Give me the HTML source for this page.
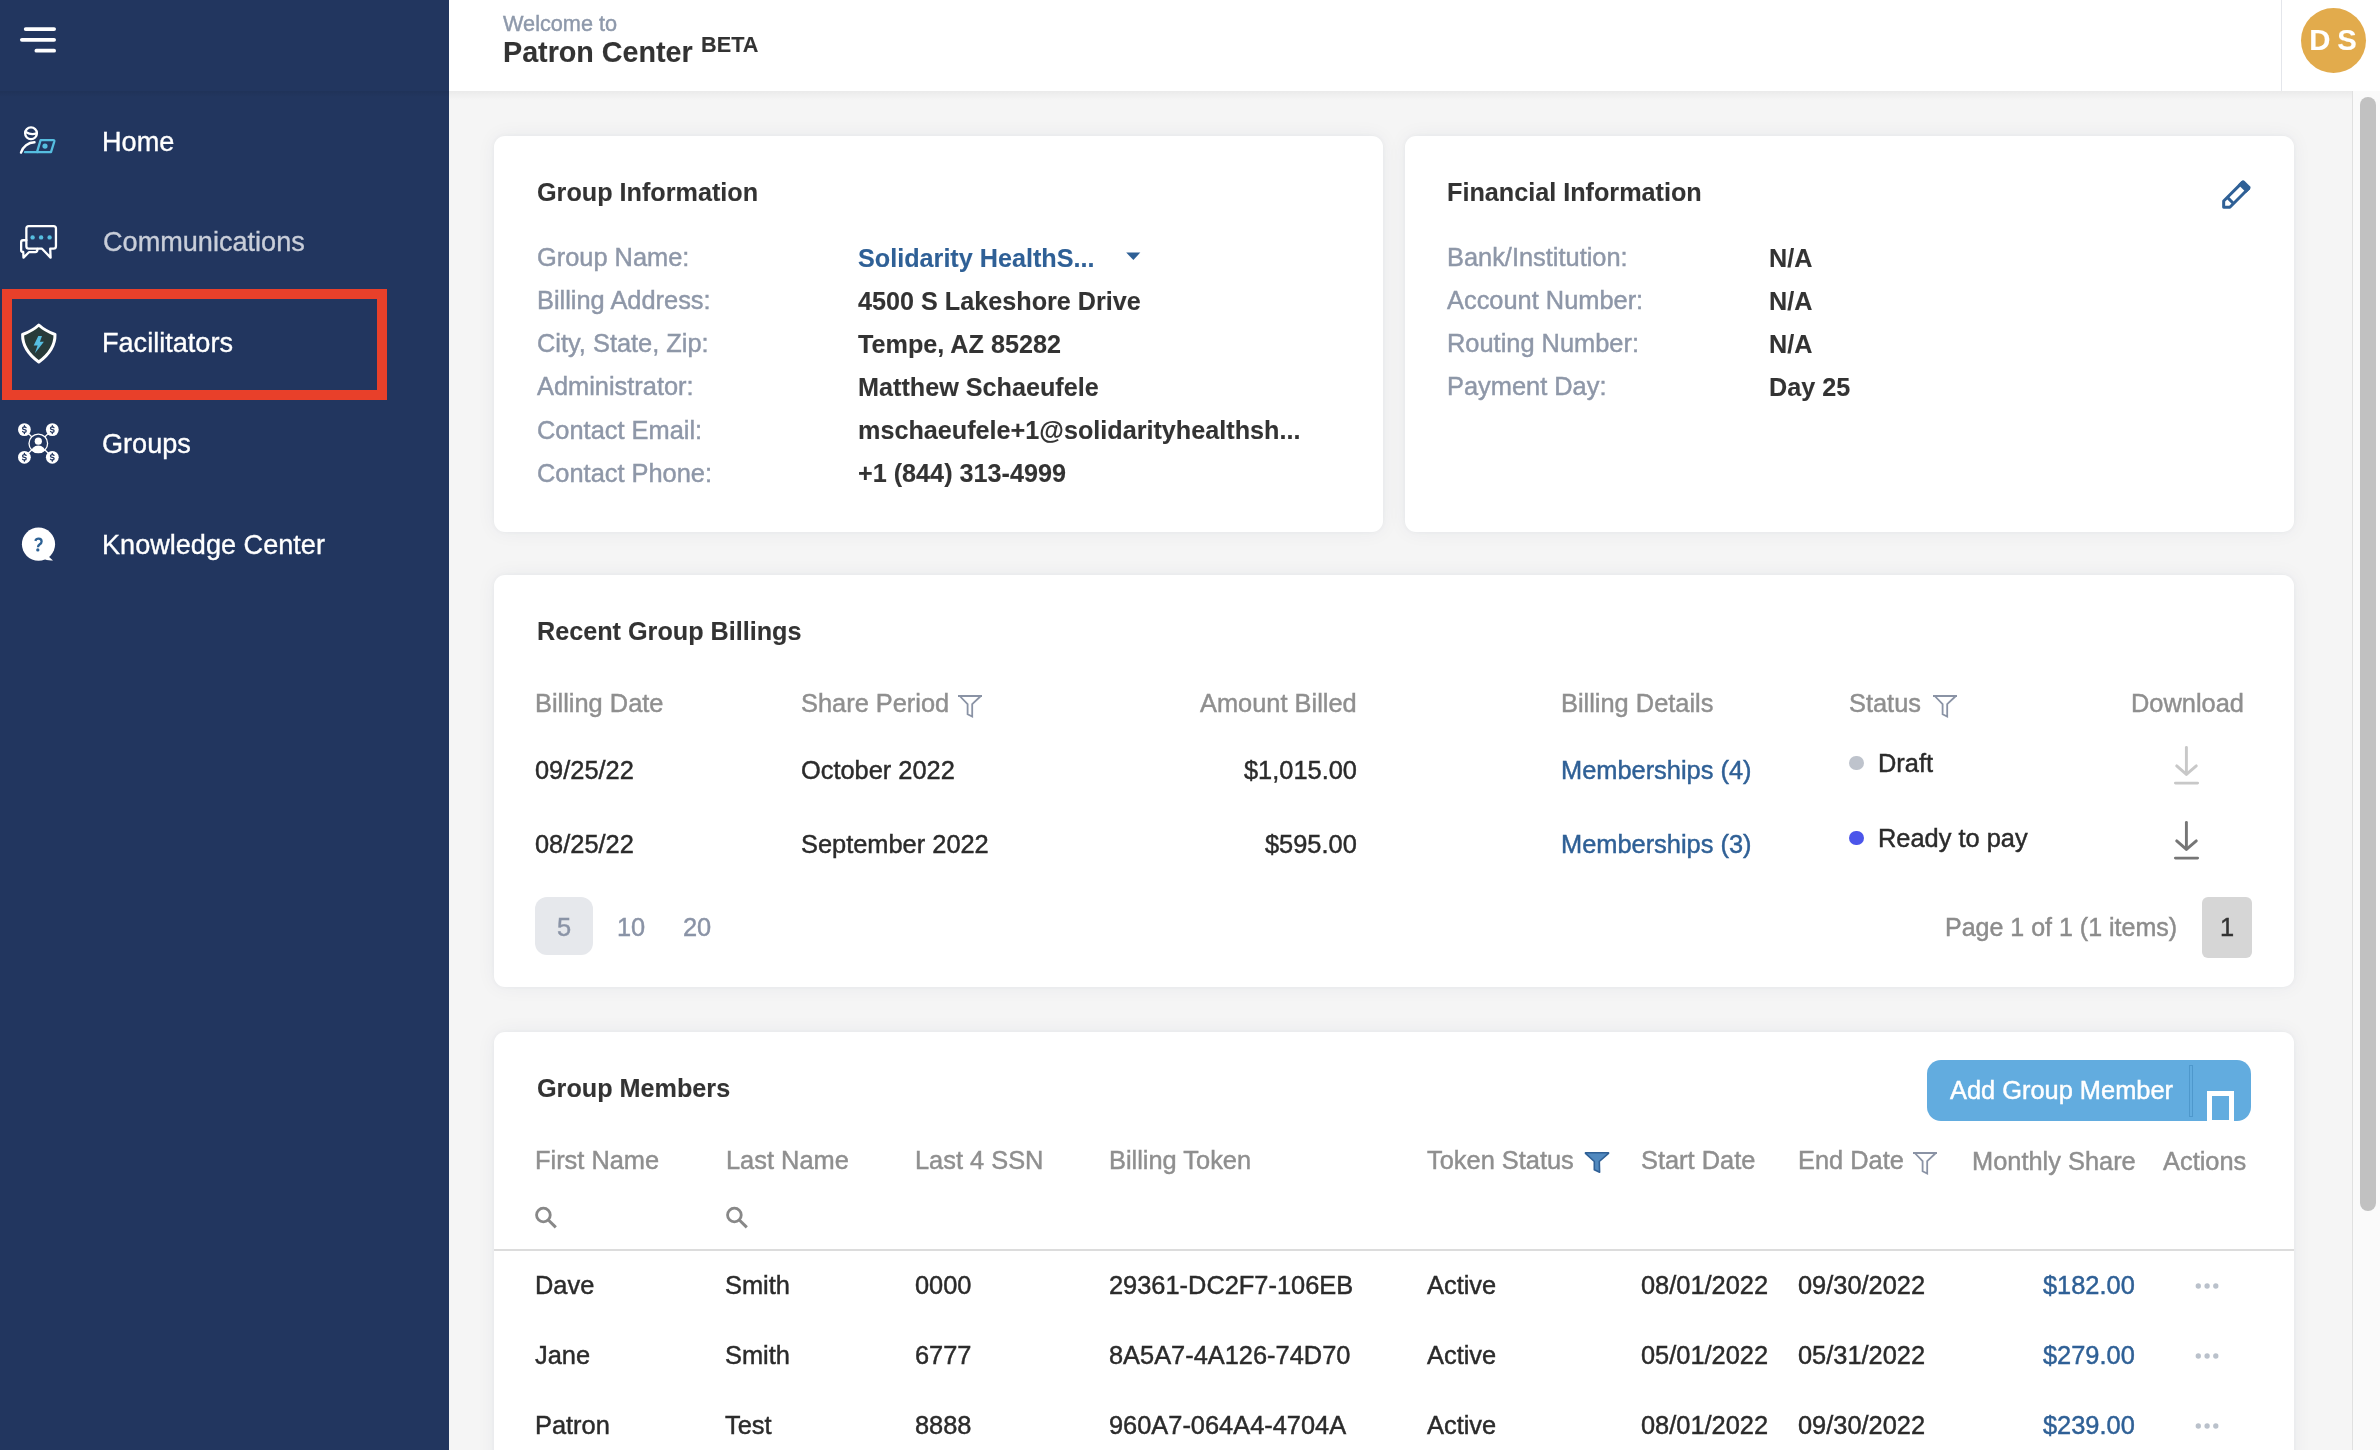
<!DOCTYPE html>
<html><head><meta charset="utf-8"><title>Patron Center</title>
<style>
html,body{margin:0;padding:0}
body{width:2380px;height:1450px;overflow:hidden;position:relative;background:#F5F5F5;font-family:"Liberation Sans",sans-serif}
.t{position:absolute;white-space:nowrap;line-height:0;will-change:transform;-webkit-text-stroke:0.45px currentColor}
.card{position:absolute;background:#fff;border-radius:11px;box-shadow:0 0 5px rgba(40,50,90,0.045),0 0 20px rgba(40,50,90,0.055)}
</style></head><body>
<div style="position:absolute;left:0;top:0;width:449px;height:1450px;background:#22365F"></div><div style="position:absolute;left:0;top:91px;width:449px;height:6px;background:linear-gradient(rgba(0,0,0,0.07),rgba(0,0,0,0))"></div><svg style="position:absolute;left:0;top:0" width="80" height="80"><g stroke="#fff" stroke-width="3.8" stroke-linecap="round">
<line x1="25.7" y1="29.1" x2="54.1" y2="29.1"/><line x1="21.9" y1="39.8" x2="54.1" y2="39.8"/><line x1="36.4" y1="50.7" x2="54.1" y2="50.7"/></g></svg><svg style="position:absolute;left:0;top:100px" width="80" height="80" viewBox="0 100 80 80"><g fill="none" stroke-linecap="round" stroke-linejoin="round">
<circle cx="31" cy="133.3" r="5.9" stroke="#fff" stroke-width="2.3"/>
<path d="M26.2 132.2 Q31 135.2 36.6 133.3" stroke="#fff" stroke-width="2.3"/>
<path d="M21 152.6 A14.5 14.5 0 0 1 34.5 142.3" stroke="#fff" stroke-width="2.4"/>
<path d="M25 152.2 L51 152.2 L54.3 141.5 Q54.6 140.2 53.3 140.2 L40.6 140.2 L37 152.2" stroke="#56BEE0" stroke-width="2.3"/>
</g><circle cx="45" cy="146.1" r="2.6" fill="#56BEE0"/></svg><svg style="position:absolute;left:0;top:200px" width="80" height="80" viewBox="0 200 80 80"><g fill="none" stroke="#fff" stroke-width="2.3" stroke-linejoin="round" stroke-linecap="round">
<path d="M28.8 226.15 L53.5 226.15 Q55.95 226.15 55.95 228.6 L55.95 246.25 Q55.95 248.7 53.5 248.7 L50.2 248.7 L50.6 257.6 L42 248.7 L28.8 248.7 Q26.35 248.7 26.35 246.25 L26.35 228.6 Q26.35 226.15 28.8 226.15 Z"/>
<path d="M26.35 240.25 L23.1 240.25 Q21.15 240.25 21.15 242.2 L21.15 250.2 Q21.15 251.8 23.2 252 L23.5 257.6 L28.9 252.2 L35.2 252.2 Q37.4 252.2 37.5 249"/>
</g><g fill="#56BEE0"><circle cx="32.6" cy="237.4" r="2.2"/><circle cx="41.1" cy="237.4" r="2.2"/><circle cx="49.6" cy="237.4" r="2.2"/></g></svg><svg style="position:absolute;left:0;top:300px" width="80" height="80" viewBox="0 300 80 80">
<path d="M38.8 325 Q33 330.5 22.6 334.5 Q22.3 350 38.8 362 Q55.3 350 55 334.5 Q44.6 330.5 38.8 325 Z" fill="#283B3A" stroke="#fff" stroke-width="3" stroke-linejoin="round"/>
<path d="M38.3 336 L42 336 L39.9 341.8 L43.9 341.8 L34.9 353.2 L37.6 345.6 L33.7 345.6 Z" fill="#56BEE0"/></svg><svg style="position:absolute;left:0;top:400px" width="80" height="80" viewBox="0 400 80 80">
<g stroke="#fff" stroke-width="1.3" fill="none"><circle cx="38.3" cy="443.4" r="9.3"/>
<line x1="24.4" y1="429.6" x2="31.7" y2="436.8"/><line x1="52.3" y1="429.6" x2="45" y2="436.8"/><line x1="24.4" y1="457.3" x2="31.7" y2="450"/><line x1="52.3" y1="457.3" x2="45" y2="450"/></g>
<circle cx="38.3" cy="441.2" r="3.6" fill="#fff"/>
<clipPath id="gc"><circle cx="38.3" cy="443.4" r="9.6"/></clipPath>
<ellipse cx="38.3" cy="453" rx="7.6" ry="7.6" fill="#fff" clip-path="url(#gc)"/>
<g fill="#fff"><circle cx="24.4" cy="429.6" r="6.4"/><circle cx="52.3" cy="429.6" r="6.4"/><circle cx="24.4" cy="457.3" r="6.4"/><circle cx="52.3" cy="457.3" r="6.4"/></g>
<g transform="translate(24.4 429.6)" fill="none" stroke="#22365F" stroke-width="1.25" stroke-linecap="round"><path d="M1.7 -1.9 Q1.3 -2.7 0 -2.7 Q-1.8 -2.7 -1.8 -1.35 Q-1.8 0 0 0 Q1.8 0 1.8 1.35 Q1.8 2.7 0 2.7 Q-1.4 2.7 -1.8 1.9"/><path d="M0 -3.9 V-2.8 M0 2.8 V3.9"/></g><g transform="translate(52.3 429.6)" fill="none" stroke="#22365F" stroke-width="1.25" stroke-linecap="round"><path d="M1.7 -1.9 Q1.3 -2.7 0 -2.7 Q-1.8 -2.7 -1.8 -1.35 Q-1.8 0 0 0 Q1.8 0 1.8 1.35 Q1.8 2.7 0 2.7 Q-1.4 2.7 -1.8 1.9"/><path d="M0 -3.9 V-2.8 M0 2.8 V3.9"/></g><g transform="translate(24.4 457.3)" fill="none" stroke="#22365F" stroke-width="1.25" stroke-linecap="round"><path d="M1.7 -1.9 Q1.3 -2.7 0 -2.7 Q-1.8 -2.7 -1.8 -1.35 Q-1.8 0 0 0 Q1.8 0 1.8 1.35 Q1.8 2.7 0 2.7 Q-1.4 2.7 -1.8 1.9"/><path d="M0 -3.9 V-2.8 M0 2.8 V3.9"/></g><g transform="translate(52.3 457.3)" fill="none" stroke="#22365F" stroke-width="1.25" stroke-linecap="round"><path d="M1.7 -1.9 Q1.3 -2.7 0 -2.7 Q-1.8 -2.7 -1.8 -1.35 Q-1.8 0 0 0 Q1.8 0 1.8 1.35 Q1.8 2.7 0 2.7 Q-1.4 2.7 -1.8 1.9"/><path d="M0 -3.9 V-2.8 M0 2.8 V3.9"/></g></svg><svg style="position:absolute;left:0;top:500px" width="80" height="80" viewBox="0 500 80 80">
<circle cx="38.5" cy="544.2" r="16.6" fill="#fff"/><path d="M48 556 L53 560.5 Q47 561 43 558.5 Z" fill="#fff"/>
<path d="M35.3 540.8 Q36 538.6 38.6 538.6 Q41.6 538.6 41.6 541.4 Q41.6 543 39.8 544.3 Q38 545.6 38 547.2" fill="none" stroke="#2D6194" stroke-width="2.3" stroke-linecap="butt"/><circle cx="37.8" cy="549.9" r="1.65" fill="#2D6194"/></svg><div class="t" style="left:102.30px;top:142.01px;font-size:27.1px;color:#FFFFFF;font-weight:400;-webkit-text-stroke:0.35px currentColor;">Home</div>
<div class="t" style="left:102.80px;top:242.21px;font-size:27.1px;color:#C9CED9;font-weight:400;-webkit-text-stroke:0.35px currentColor;">Communications</div>
<div class="t" style="left:102.30px;top:343.01px;font-size:27.1px;color:#FFFFFF;font-weight:400;-webkit-text-stroke:0.35px currentColor;">Facilitators</div>
<div class="t" style="left:102.30px;top:444.21px;font-size:27.1px;color:#FFFFFF;font-weight:400;-webkit-text-stroke:0.35px currentColor;">Groups</div>
<div class="t" style="left:102.30px;top:545.01px;font-size:27.1px;color:#FFFFFF;font-weight:400;-webkit-text-stroke:0.35px currentColor;">Knowledge Center</div>
<div style="position:absolute;left:2px;top:289px;width:365px;height:91px;border:10px solid #E8402A"></div><div style="position:absolute;left:449px;top:0;width:1931px;height:91px;background:#fff"></div><div style="position:absolute;left:449px;top:91px;width:1931px;height:9px;background:linear-gradient(rgba(0,0,0,0.045),rgba(0,0,0,0))"></div><div style="position:absolute;left:2280.6px;top:0;width:1.5px;height:91px;background:#E4E6EB"></div><div style="position:absolute;left:2301px;top:7.9px;width:65px;height:65px;border-radius:50%;background:#E2AB4C"></div><div class="t" style="left:2333.00px;top:39.95px;font-size:29.3px;color:#FFFFFF;font-weight:700;-webkit-text-stroke:0.1px currentColor;transform:translateX(-50%);word-spacing:-1.5px;">D S</div>
<div class="t" style="left:503.00px;top:23.98px;font-size:21.7px;color:#8E99AB;font-weight:400;">Welcome to</div>
<div class="t" style="left:503.30px;top:51.56px;font-size:28.7px;color:#333333;font-weight:700;-webkit-text-stroke:0.1px currentColor;">Patron Center</div>
<div class="t" style="left:701.00px;top:44.78px;font-size:21.7px;color:#333333;font-weight:700;-webkit-text-stroke:0.1px currentColor;">BETA</div>
<div style="position:absolute;left:2352px;top:91px;width:28px;height:1359px;background:#FAFAFA;border-left:1.6px solid #E0E0E0;box-sizing:border-box"></div><div style="position:absolute;left:2359.8px;top:97px;width:16px;height:1114px;border-radius:8px;background:#C1C1C1"></div><div class="card" style="left:494px;top:136px;width:889px;height:396px"></div><div class="t" style="left:536.80px;top:192.07px;font-size:25.2px;color:#333333;font-weight:700;-webkit-text-stroke:0.1px currentColor;">Group Information</div>
<div class="t" style="left:536.80px;top:257.10px;font-size:25.4px;color:#8E97A8;font-weight:400;">Group Name:</div>
<div class="t" style="left:858.00px;top:257.87px;font-size:25.2px;color:#2F6096;font-weight:700;-webkit-text-stroke:0.1px currentColor;">Solidarity HealthS...</div>
<div class="t" style="left:536.80px;top:300.20px;font-size:25.4px;color:#8E97A8;font-weight:400;">Billing Address:</div>
<div class="t" style="left:858.00px;top:300.97px;font-size:25.2px;color:#333333;font-weight:700;-webkit-text-stroke:0.1px currentColor;">4500 S Lakeshore Drive</div>
<div class="t" style="left:536.80px;top:343.30px;font-size:25.4px;color:#8E97A8;font-weight:400;">City, State, Zip:</div>
<div class="t" style="left:858.00px;top:344.07px;font-size:25.2px;color:#333333;font-weight:700;-webkit-text-stroke:0.1px currentColor;">Tempe, AZ 85282</div>
<div class="t" style="left:536.80px;top:386.40px;font-size:25.4px;color:#8E97A8;font-weight:400;">Administrator:</div>
<div class="t" style="left:858.00px;top:387.17px;font-size:25.2px;color:#333333;font-weight:700;-webkit-text-stroke:0.1px currentColor;">Matthew Schaeufele</div>
<div class="t" style="left:536.80px;top:429.50px;font-size:25.4px;color:#8E97A8;font-weight:400;">Contact Email:</div>
<div class="t" style="left:858.00px;top:430.27px;font-size:25.2px;color:#333333;font-weight:700;-webkit-text-stroke:0.1px currentColor;">mschaeufele+1@solidarityhealthsh...</div>
<div class="t" style="left:536.80px;top:472.60px;font-size:25.4px;color:#8E97A8;font-weight:400;">Contact Phone:</div>
<div class="t" style="left:858.00px;top:473.37px;font-size:25.2px;color:#333333;font-weight:700;-webkit-text-stroke:0.1px currentColor;">+1 (844) 313-4999</div>
<svg style="position:absolute;left:1120px;top:248px" width="30" height="20"><path d="M6.2 4.6 L20.3 4.6 L13.4 11.9 Z" fill="#2F6096"/></svg><div class="card" style="left:1405px;top:136px;width:889px;height:396px"></div><div class="t" style="left:1447.30px;top:192.07px;font-size:25.2px;color:#333333;font-weight:700;-webkit-text-stroke:0.1px currentColor;">Financial Information</div>
<div class="t" style="left:1447.30px;top:257.10px;font-size:25.4px;color:#8E97A8;font-weight:400;">Bank/Institution:</div>
<div class="t" style="left:1768.50px;top:257.87px;font-size:25.2px;color:#333333;font-weight:700;-webkit-text-stroke:0.1px currentColor;">N/A</div>
<div class="t" style="left:1447.30px;top:300.20px;font-size:25.4px;color:#8E97A8;font-weight:400;">Account Number:</div>
<div class="t" style="left:1768.50px;top:300.97px;font-size:25.2px;color:#333333;font-weight:700;-webkit-text-stroke:0.1px currentColor;">N/A</div>
<div class="t" style="left:1447.30px;top:343.30px;font-size:25.4px;color:#8E97A8;font-weight:400;">Routing Number:</div>
<div class="t" style="left:1768.50px;top:344.07px;font-size:25.2px;color:#333333;font-weight:700;-webkit-text-stroke:0.1px currentColor;">N/A</div>
<div class="t" style="left:1447.30px;top:386.40px;font-size:25.4px;color:#8E97A8;font-weight:400;">Payment Day:</div>
<div class="t" style="left:1768.50px;top:387.17px;font-size:25.2px;color:#333333;font-weight:700;-webkit-text-stroke:0.1px currentColor;">Day 25</div>
<svg style="position:absolute;left:2200px;top:160px" width="70" height="70" viewBox="2200 160 70 70">
<g transform="translate(2222.1 208.8) rotate(-45)">
<path d="M2.2 0 L6.6 -4.35 L33 -4.35 L33 4.35 L6.6 4.35 Z" fill="none" stroke="#2F6096" stroke-width="3" stroke-linejoin="round"/>
<line x1="11.8" y1="-5" x2="11.8" y2="5" stroke="#2F6096" stroke-width="3"/>
<path d="M28.5 -5.85 L33.5 -5.85 Q35.6 -5.85 35.6 -3.75 L35.6 3.75 Q35.6 5.85 33.5 5.85 L28.5 5.85 Z" fill="#2F6096"/>
</g></svg><div class="card" style="left:494px;top:575px;width:1800px;height:412px"></div><div class="t" style="left:536.50px;top:631.17px;font-size:25.2px;color:#333333;font-weight:700;-webkit-text-stroke:0.1px currentColor;">Recent Group Billings</div>
<div class="t" style="left:535.20px;top:702.80px;font-size:25.4px;color:#8F8F8F;font-weight:400;">Billing Date</div>
<div class="t" style="left:800.50px;top:702.80px;font-size:25.4px;color:#8F8F8F;font-weight:400;">Share Period</div>
<div class="t" style="right:1023.50px;top:702.80px;font-size:25.4px;color:#8F8F8F;font-weight:400;">Amount Billed</div>
<div class="t" style="left:1560.80px;top:702.80px;font-size:25.4px;color:#8F8F8F;font-weight:400;">Billing Details</div>
<div class="t" style="left:1848.50px;top:702.80px;font-size:25.4px;color:#8F8F8F;font-weight:400;">Status</div>
<div class="t" style="right:136.00px;top:702.80px;font-size:25.4px;color:#8F8F8F;font-weight:400;">Download</div>
<svg style="position:absolute;left:956px;top:693.2px" width="30" height="30" viewBox="-2 -2 30 30">
<path d="M0 1 L24 1" stroke="#8A93A5" stroke-width="2"/>
<path d="M2.2 1.5 L9.6 9.2 L9.6 19.3 L14.2 21.5 L14.2 9.2 L22.3 1.5" fill="none" stroke="#8A93A5" stroke-width="1.8" stroke-linejoin="miter"/></svg><svg style="position:absolute;left:1931px;top:693.2px" width="30" height="30" viewBox="-2 -2 30 30">
<path d="M0 1 L24 1" stroke="#8A93A5" stroke-width="2"/>
<path d="M2.2 1.5 L9.6 9.2 L9.6 19.3 L14.2 21.5 L14.2 9.2 L22.3 1.5" fill="none" stroke="#8A93A5" stroke-width="1.8" stroke-linejoin="miter"/></svg><div class="t" style="left:534.50px;top:770.10px;font-size:25.4px;color:#2B2B2B;font-weight:400;">09/25/22</div>
<div class="t" style="left:534.50px;top:844.20px;font-size:25.4px;color:#2B2B2B;font-weight:400;">08/25/22</div>
<div class="t" style="left:800.50px;top:770.10px;font-size:25.4px;color:#2B2B2B;font-weight:400;">October 2022</div>
<div class="t" style="left:800.50px;top:844.20px;font-size:25.4px;color:#2B2B2B;font-weight:400;">September 2022</div>
<div class="t" style="right:1023.50px;top:770.10px;font-size:25.4px;color:#2B2B2B;font-weight:400;">$1,015.00</div>
<div class="t" style="right:1023.50px;top:844.20px;font-size:25.4px;color:#2B2B2B;font-weight:400;">$595.00</div>
<div class="t" style="left:1560.80px;top:770.10px;font-size:25.4px;color:#2F6096;font-weight:400;">Memberships (4)</div>
<div class="t" style="left:1560.80px;top:844.20px;font-size:25.4px;color:#2F6096;font-weight:400;">Memberships (3)</div>
<div style="position:absolute;left:1849.2px;top:755.8px;width:14.6px;height:14.6px;border-radius:50%;background:#BEC3CC"></div><div style="position:absolute;left:1849.2px;top:830.8px;width:14.6px;height:14.6px;border-radius:50%;background:#4B55EA"></div><div class="t" style="left:1877.80px;top:763.00px;font-size:25.4px;color:#2B2B2B;font-weight:400;">Draft</div>
<div class="t" style="left:1877.80px;top:837.90px;font-size:25.4px;color:#2B2B2B;font-weight:400;">Ready to pay</div>
<svg style="position:absolute;left:2165px;top:740px" width="40" height="50" viewBox="0 0 40 50"><g fill="none" stroke="#C8C8C8" stroke-width="2.9" stroke-linecap="round" stroke-linejoin="round">
<line x1="21.4" y1="7.4" x2="21.4" y2="34"/><polyline points="11.7,25.9 21.4,34.4 31.3,25.9"/><line x1="10.4" y1="43.1" x2="32.6" y2="43.1"/></g></svg><svg style="position:absolute;left:2165px;top:815px" width="40" height="50" viewBox="0 0 40 50"><g fill="none" stroke="#767676" stroke-width="2.9" stroke-linecap="round" stroke-linejoin="round">
<line x1="21.4" y1="7.4" x2="21.4" y2="34"/><polyline points="11.7,25.9 21.4,34.4 31.3,25.9"/><line x1="10.4" y1="43.1" x2="32.6" y2="43.1"/></g></svg><div style="position:absolute;left:535px;top:896.6px;width:58px;height:58px;border-radius:12px;background:#E6E8EC"></div><div class="t" style="left:564.00px;top:926.50px;font-size:25.4px;color:#8A93A6;font-weight:400;transform:translateX(-50%);">5</div>
<div class="t" style="left:616.50px;top:926.50px;font-size:25.4px;color:#8A93A6;font-weight:400;">10</div>
<div class="t" style="left:682.80px;top:926.50px;font-size:25.4px;color:#8A93A6;font-weight:400;">20</div>
<div class="t" style="right:202.50px;top:926.94px;font-size:25px;color:#8C8C8C;font-weight:400;">Page 1 of 1 (1 items)</div>
<div style="position:absolute;left:2202px;top:897px;width:49.5px;height:61px;border-radius:6px;background:#D6D6D6"></div><div class="t" style="left:2226.80px;top:926.80px;font-size:25.4px;color:#333333;font-weight:400;transform:translateX(-50%);">1</div>
<div class="card" style="left:494px;top:1032px;width:1800px;height:500px"></div><div class="t" style="left:536.50px;top:1087.97px;font-size:25.2px;color:#333333;font-weight:700;-webkit-text-stroke:0.1px currentColor;">Group Members</div>
<div style="position:absolute;left:1927px;top:1060px;width:324px;height:61px;border-radius:14px;background:#62ACDF"></div><div style="position:absolute;left:2189.2px;top:1065px;width:3.5px;height:52px;box-sizing:border-box;border:0.8px solid #4E98CC"></div><div style="position:absolute;left:2206.5px;top:1090.8px;width:27.6px;height:30px;box-sizing:border-box;border:5.5px solid #fff;border-bottom:0.8px solid #fff"></div><div class="t" style="left:1949.50px;top:1090.20px;font-size:25.4px;color:#FFFFFF;font-weight:400;">Add Group Member</div>
<div class="t" style="left:535.20px;top:1160.40px;font-size:25.4px;color:#8F8F8F;font-weight:400;">First Name</div>
<div class="t" style="left:725.50px;top:1160.40px;font-size:25.4px;color:#8F8F8F;font-weight:400;">Last Name</div>
<div class="t" style="left:915.00px;top:1160.40px;font-size:25.4px;color:#8F8F8F;font-weight:400;">Last 4 SSN</div>
<div class="t" style="left:1109.00px;top:1160.40px;font-size:25.4px;color:#8F8F8F;font-weight:400;">Billing Token</div>
<div class="t" style="left:1427.00px;top:1160.40px;font-size:25.4px;color:#8F8F8F;font-weight:400;">Token Status</div>
<div class="t" style="left:1641.00px;top:1160.40px;font-size:25.4px;color:#8F8F8F;font-weight:400;">Start Date</div>
<div class="t" style="left:1797.50px;top:1160.40px;font-size:25.4px;color:#8F8F8F;font-weight:400;">End Date</div>
<div class="t" style="right:244.00px;top:1161.30px;font-size:25.4px;color:#8F8F8F;font-weight:400;">Monthly Share</div>
<div class="t" style="left:2162.80px;top:1161.30px;font-size:25.4px;color:#8F8F8F;font-weight:400;">Actions</div>
<svg style="position:absolute;left:1583px;top:1150px" width="30" height="30" viewBox="-2 -2 30 30">
<path d="M0.5 0.8 L23.5 0.8 L23.5 1.4 L14.3 9.5 L14.6 20.3 L9.3 17.8 L9.3 9.5 L0.5 1.4 Z" fill="#5189BF" stroke="#2F6096" stroke-width="1.6" stroke-linejoin="round"/></svg><svg style="position:absolute;left:1910.6px;top:1149.5px" width="30" height="30" viewBox="-2 -2 30 30">
<path d="M0 1 L24 1" stroke="#8A93A5" stroke-width="2"/>
<path d="M2.2 1.5 L9.6 9.2 L9.6 19.3 L14.2 21.5 L14.2 9.2 L22.3 1.5" fill="none" stroke="#8A93A5" stroke-width="1.8" stroke-linejoin="miter"/></svg><svg style="position:absolute;left:530px;top:1200px" width="35" height="35" viewBox="0 0 35 35"><g fill="none" stroke="#888" stroke-linecap="butt">
<circle cx="13.4" cy="15" r="6.85" stroke-width="2.8"/><line x1="18.6" y1="20.2" x2="25.8" y2="27.4" stroke-width="3"/></g></svg><svg style="position:absolute;left:720.5px;top:1200px" width="35" height="35" viewBox="0 0 35 35"><g fill="none" stroke="#888" stroke-linecap="butt">
<circle cx="13.4" cy="15" r="6.85" stroke-width="2.8"/><line x1="18.6" y1="20.2" x2="25.8" y2="27.4" stroke-width="3"/></g></svg><div style="position:absolute;left:494px;top:1249px;width:1800px;height:2px;background:#DCDCDC"></div><div class="t" style="left:534.50px;top:1284.90px;font-size:25.4px;color:#2B2B2B;font-weight:400;">Dave</div>
<div class="t" style="left:725.00px;top:1284.90px;font-size:25.4px;color:#2B2B2B;font-weight:400;">Smith</div>
<div class="t" style="left:914.50px;top:1284.90px;font-size:25.4px;color:#2B2B2B;font-weight:400;">0000</div>
<div class="t" style="left:1108.50px;top:1284.90px;font-size:25.4px;color:#2B2B2B;font-weight:400;">29361-DC2F7-106EB</div>
<div class="t" style="left:1427.00px;top:1284.90px;font-size:25.4px;color:#2B2B2B;font-weight:400;">Active</div>
<div class="t" style="left:1641.00px;top:1284.90px;font-size:25.4px;color:#2B2B2B;font-weight:400;">08/01/2022</div>
<div class="t" style="left:1797.50px;top:1284.90px;font-size:25.4px;color:#2B2B2B;font-weight:400;">09/30/2022</div>
<div class="t" style="right:245.00px;top:1284.90px;font-size:25.4px;color:#2F6096;font-weight:400;">$182.00</div>
<svg style="position:absolute;left:2190px;top:1281.0px" width="35" height="10"><g fill="#BAC1CB"><circle cx="8.3" cy="5" r="2.65"/><circle cx="17.1" cy="5" r="2.65"/><circle cx="25.8" cy="5" r="2.65"/></g></svg><div class="t" style="left:534.50px;top:1354.50px;font-size:25.4px;color:#2B2B2B;font-weight:400;">Jane</div>
<div class="t" style="left:725.00px;top:1354.50px;font-size:25.4px;color:#2B2B2B;font-weight:400;">Smith</div>
<div class="t" style="left:914.50px;top:1354.50px;font-size:25.4px;color:#2B2B2B;font-weight:400;">6777</div>
<div class="t" style="left:1108.50px;top:1354.50px;font-size:25.4px;color:#2B2B2B;font-weight:400;">8A5A7-4A126-74D70</div>
<div class="t" style="left:1427.00px;top:1354.50px;font-size:25.4px;color:#2B2B2B;font-weight:400;">Active</div>
<div class="t" style="left:1641.00px;top:1354.50px;font-size:25.4px;color:#2B2B2B;font-weight:400;">05/01/2022</div>
<div class="t" style="left:1797.50px;top:1354.50px;font-size:25.4px;color:#2B2B2B;font-weight:400;">05/31/2022</div>
<div class="t" style="right:245.00px;top:1354.50px;font-size:25.4px;color:#2F6096;font-weight:400;">$279.00</div>
<svg style="position:absolute;left:2190px;top:1350.6px" width="35" height="10"><g fill="#BAC1CB"><circle cx="8.3" cy="5" r="2.65"/><circle cx="17.1" cy="5" r="2.65"/><circle cx="25.8" cy="5" r="2.65"/></g></svg><div class="t" style="left:534.50px;top:1424.80px;font-size:25.4px;color:#2B2B2B;font-weight:400;">Patron</div>
<div class="t" style="left:725.00px;top:1424.80px;font-size:25.4px;color:#2B2B2B;font-weight:400;">Test</div>
<div class="t" style="left:914.50px;top:1424.80px;font-size:25.4px;color:#2B2B2B;font-weight:400;">8888</div>
<div class="t" style="left:1108.50px;top:1424.80px;font-size:25.4px;color:#2B2B2B;font-weight:400;">960A7-064A4-4704A</div>
<div class="t" style="left:1427.00px;top:1424.80px;font-size:25.4px;color:#2B2B2B;font-weight:400;">Active</div>
<div class="t" style="left:1641.00px;top:1424.80px;font-size:25.4px;color:#2B2B2B;font-weight:400;">08/01/2022</div>
<div class="t" style="left:1797.50px;top:1424.80px;font-size:25.4px;color:#2B2B2B;font-weight:400;">09/30/2022</div>
<div class="t" style="right:245.00px;top:1424.80px;font-size:25.4px;color:#2F6096;font-weight:400;">$239.00</div>
<svg style="position:absolute;left:2190px;top:1420.8999999999999px" width="35" height="10"><g fill="#BAC1CB"><circle cx="8.3" cy="5" r="2.65"/><circle cx="17.1" cy="5" r="2.65"/><circle cx="25.8" cy="5" r="2.65"/></g></svg>
</body></html>
